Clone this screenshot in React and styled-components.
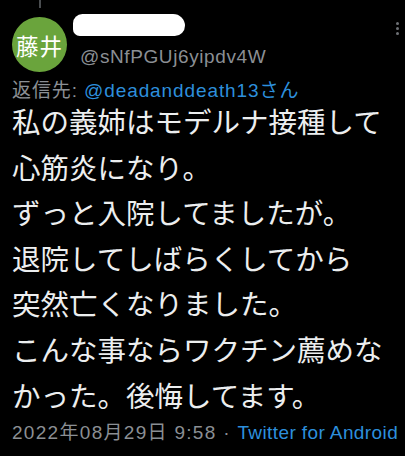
import React from 'react';
import styled, { createGlobalStyle } from 'styled-components';

const GlobalStyle = createGlobalStyle`
    html, body {
        margin: 0;
        padding: 0;
        background: #000;
    }
    body {
        font-family: "Liberation Sans", "Noto Sans CJK JP", sans-serif;
    }
`;

const Tweet = styled.div`
    width: 405px;
    height: 456px;
    background: #000;
    padding: 0 12px;
    box-sizing: border-box;
    overflow: hidden;
`;

const Header = styled.div`
    display: flex;
    align-items: flex-start;
`;

const AvatarCol = styled.div`
    display: flex;
    flex-direction: column;
    align-items: center;
    width: 55px;
`;

const Connector = styled.div`
    width: 2px;
    height: 8px;
    background: #4a4d50;
    margin-bottom: 9px;
`;

const Avatar = styled.div`
    width: 55px;
    height: 55px;
    border-radius: 50%;
    background: #6aa43c;
    color: #fff;
    display: flex;
    align-items: center;
    justify-content: center;
    font-family: "Noto Sans CJK JP", sans-serif;
    font-size: 22.5px;
    letter-spacing: 1px;
`;

const NameCol = styled.div`
    flex: 1;
    display: flex;
    flex-direction: column;
    padding-top: 14px;
    margin-left: 6px;
`;

const Redacted = styled.div`
    width: 112px;
    height: 22px;
    background: #fff;
    border-radius: 11px 14px 12px 8px;
`;

const Handle = styled.div`
    margin-top: 10px;
    padding-left: 7px;
    color: #8b8f94;
    font-size: 19px;
    line-height: 22px;
    letter-spacing: 0.6px;
`;

const Menu = styled.div`
    display: flex;
    flex-direction: column;
    gap: 2px;
    padding-top: 22px;
    margin-right: -6px;
`;

const Dot = styled.span`
    width: 3px;
    height: 3px;
    border-radius: 50%;
    background: #6e7175;
`;

const ReplyTo = styled.div`
    margin-top: 12px;
    color: #8b8f94;
    font-size: 19px;
    line-height: 14px;
    letter-spacing: 0.9px;
`;

const Link = styled.span`
    color: #2d8fdc;
`;

const Body = styled.div`
    color: #eceeef;
    font-family: "Noto Sans CJK JP", sans-serif;
    font-size: 28.5px;
    line-height: 45.6px;
    white-space: pre-line;
`;

const Footer = styled.div`
    margin-top: 4px;
    color: #8b8f94;
    font-size: 19px;
    line-height: 24px;
    letter-spacing: 0.4px;
    white-space: nowrap;
`;

const Stamp = styled.span`
    letter-spacing: 1.3px;
`;

const lines = [
    '私の義姉はモデルナ接種して',
    '心筋炎になり。',
    'ずっと入院してましたが。',
    '退院してしばらくしてから',
    '突然亡くなりました。',
    'こんな事ならワクチン薦めな',
    'かった。後悔してます。',
];

const App = () => (
    <Tweet>
        <GlobalStyle />
        <Header>
            <AvatarCol>
                <Connector />
                <Avatar>藤井</Avatar>
            </AvatarCol>
            <NameCol>
                <Redacted />
                <Handle>@sNfPGUj6yipdv4W</Handle>
            </NameCol>
            <Menu>
                <Dot />
                <Dot />
                <Dot />
            </Menu>
        </Header>
        <ReplyTo>
            返信先: <Link>@deadanddeath13さん</Link>
        </ReplyTo>
        <Body>{lines.join('\n')}</Body>
        <Footer>
            <Stamp>2022年08月29日 9:58 · </Stamp>
            <Link>Twitter for Android</Link>
        </Footer>
    </Tweet>
);

export default App;
